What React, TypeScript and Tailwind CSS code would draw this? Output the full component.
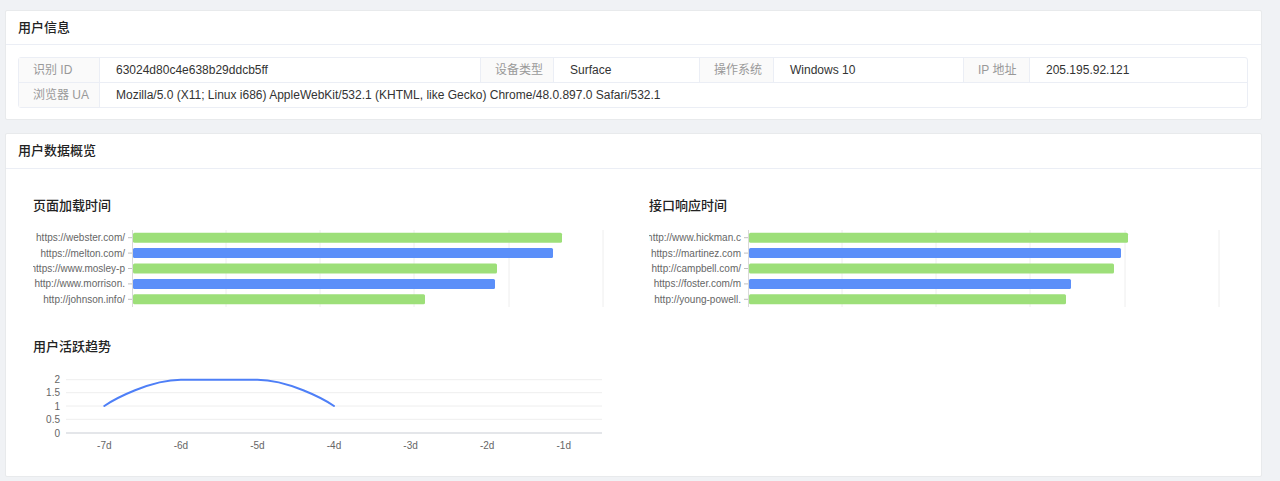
const FONT = { fontFamily: '"Liberation Sans", "Noto Sans CJK SC", sans-serif' };

type Bar = { label: string; end: number };

const loadBars: Bar[] = [
  { label: 'https://webster.com/', end: 529 },
  { label: 'https://melton.com/', end: 520 },
  { label: 'https://www.mosley-p', end: 464 },
  { label: 'http://www.morrison.', end: 462 },
  { label: 'http://johnson.info/', end: 392 },
];

const apiBars: Bar[] = [
  { label: 'http://www.hickman.c', end: 479 },
  { label: 'https://martinez.com', end: 472 },
  { label: 'http://campbell.com/', end: 465 },
  { label: 'https://foster.com/m', end: 422 },
  { label: 'http://young-powell.', end: 417 },
];

const GRID_X = [193, 287, 381, 476, 570];

function BarChart({ bars }: { bars: Bar[] }) {
  const axis = 99;
  const step = 15.4;
  return (
    <svg width={571} height={82} className="block" style={FONT}>
      {GRID_X.map((x) => (
        <line key={x} x1={x} x2={x} y1={3} y2={80} stroke="#eeeeee" strokeWidth={1} />
      ))}
      <line x1={axis + 0.5} x2={axis + 0.5} y1={3} y2={80} stroke="#d9d9d9" strokeWidth={1} />
      {bars.map((b, i) => {
        const cy = 3 + step * i + step / 2;
        return (
          <g key={b.label}>
            <line x1={95} x2={axis} y1={cy} y2={cy} stroke="#bfbfbf" strokeWidth={1} />
            <text x={92} y={cy + 3.5} textAnchor="end" fontSize={10} fill="#666666">
              {b.label}
            </text>
            <rect
              x={axis + 1}
              y={cy - 5}
              width={b.end - axis - 1}
              height={10}
              rx={1.5}
              fill={i % 2 === 0 ? '#9ddf79' : '#5b8ff9'}
            />
          </g>
        );
      })}
    </svg>
  );
}

function LineChart() {
  const left = 33;
  const right = 569;
  const cw = (right - left) / 7;
  const ys = [
    { v: '2', y: 10.7 },
    { v: '1.5', y: 23.7 },
    { v: '1', y: 37 },
    { v: '0.5', y: 50.3 },
  ];
  const cx = (i: number) => left + cw * i + cw / 2;
  const days = ['-7d', '-6d', '-5d', '-4d', '-3d', '-2d', '-1d'];
  const p = [cx(0), cx(1), cx(2), cx(3)];
  const d = `M${p[0]} 37 C ${p[0] + 10} 30, ${p[1] - 30} 10.7, ${p[1]} 10.7 L ${p[2]} 10.7 C ${p[2] + 30} 10.7, ${p[3] - 10} 30, ${p[3]} 37`;
  return (
    <svg width={571} height={85} className="block" style={FONT}>
      {ys.map((t) => (
        <g key={t.v}>
          <line x1={left} x2={right} y1={t.y} y2={t.y} stroke="#eeeeee" strokeWidth={1} />
          <text x={27} y={t.y + 3.5} textAnchor="end" fontSize={10} fill="#666666">
            {t.v}
          </text>
        </g>
      ))}
      <line x1={left} x2={right} y1={64} y2={64} stroke="#c9cdd4" strokeWidth={1} />
      <text x={27} y={67.5} textAnchor="end" fontSize={10} fill="#666666">
        0
      </text>
      {days.map((day, i) => (
        <text key={day} x={cx(i)} y={79.5} textAnchor="middle" fontSize={10} fill="#666666">
          {day}
        </text>
      ))}
      <path d={d} fill="none" stroke="#4e7ff7" strokeWidth={2} strokeLinecap="round" />
    </svg>
  );
}

function Label({ children }: { children: React.ReactNode }) {
  return (
    <div className="flex items-center whitespace-nowrap bg-[#fafafa] px-[14px] text-[#999] border-r border-[#ebeef5]">
      {children}
    </div>
  );
}

function Value({ children, last }: { children: React.ReactNode; last?: boolean }) {
  return (
    <div
      className={`flex items-center whitespace-nowrap px-4 text-[#333] ${last ? '' : 'border-r border-[#ebeef5]'}`}
    >
      {children}
    </div>
  );
}

export default function App() {
  return (
    <div className="min-h-[481px] bg-[#f0f2f5] pt-[10px] pl-[5px]" style={FONT}>
      <div className="w-[1257px] bg-white border border-[#e8eaec] rounded-[2px]">
        <div className="h-[34px] flex items-center px-3 border-b border-[#ebeef5] text-[13px] font-medium text-[#222]">
          用户信息
        </div>
        <div className="pt-[12px] pb-[11px] pl-3 pr-[13px]">
          <div className="border border-[#ebeef5] rounded-[3px] text-[12px]">
            <div className="grid grid-cols-[81px_381px_73px_146px_74px_190px_66px_1fr] h-[25px] border-b border-[#ebeef5]">
              <Label>识别 ID</Label>
              <Value>63024d80c4e638b29ddcb5ff</Value>
              <Label>设备类型</Label>
              <Value>Surface</Value>
              <Label>操作系统</Label>
              <Value>Windows 10</Value>
              <Label>IP 地址</Label>
              <Value last>205.195.92.121</Value>
            </div>
            <div className="grid grid-cols-[81px_1fr] h-[24px]">
              <Label>浏览器 UA</Label>
              <Value last>
                Mozilla/5.0 (X11; Linux i686) AppleWebKit/532.1 (KHTML, like Gecko) Chrome/48.0.897.0 Safari/532.1
              </Value>
            </div>
          </div>
        </div>
      </div>

      <div className="mt-[13px] w-[1257px] bg-white border border-[#e8eaec] rounded-[2px]">
        <div className="h-[35px] flex items-center px-3 border-b border-[#ebeef5] text-[13px] font-medium text-[#222]">
          用户数据概览
        </div>
        <div className="pt-[28px] pb-[22px] pl-[27px]">
          <div className="grid grid-cols-[616px_571px]">
            <div>
              <div className="text-[13px] font-medium text-[#222] leading-[18px]">页面加载时间</div>
              <div className="mt-[12px]">
                <BarChart bars={loadBars} />
              </div>
            </div>
            <div>
              <div className="text-[13px] font-medium text-[#222] leading-[18px]">接口响应时间</div>
              <div className="mt-[12px]">
                <BarChart bars={apiBars} />
              </div>
            </div>
          </div>
          <div className="mt-[29px]">
            <div className="text-[13px] font-medium text-[#222] leading-[18px]">用户活跃趋势</div>
            <div className="mt-[13px]">
              <LineChart />
            </div>
          </div>
        </div>
      </div>
    </div>
  );
}
